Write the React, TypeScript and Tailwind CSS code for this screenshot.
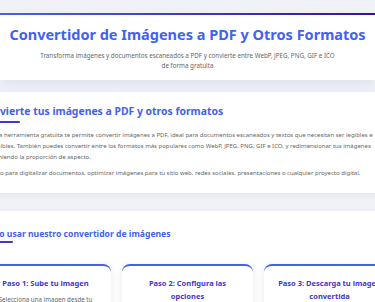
const STEPS = [
  {
    title: 'Paso 1: Sube tu imagen',
    text: 'Selecciona una imagen desde tu dispositivo o arrástrala directamente al área de carga.',
  },
  {
    title: 'Paso 2: Configura las opciones',
    text: 'Elige el formato de salida, el tamaño y la calidad que necesitas.',
  },
  {
    title: 'Paso 3: Descarga tu imagen convertida',
    text: 'Haz clic en convertir y descarga el archivo resultante al instante.',
  },
];

function SectionTitle({ children, size, bar }: { children: string; size: string; bar: string }) {
  return (
    <div>
      <h2 className={`${size} font-bold text-[#4361ee]`}>{children}</h2>
      <div className={`${bar} h-[2px] bg-[#3f37c9] rounded-full`} />
    </div>
  );
}

export default function App() {
  return (
    <div className="min-h-screen overflow-hidden bg-[#f0f2f8] font-['Noto_Sans','Open_Sans',sans-serif] pt-[13px] pb-6">
      <header className="bg-white shadow-[0_4px_10px_rgba(30,40,90,0.08)]">
        <div className="h-[2px] bg-linear-to-r from-[#4361ee] via-[#3f37c9] to-[#3a0ca3]" />
        <div className="pt-[9px] pb-[9px] text-center">
          <h1 className="text-[14.5px] font-bold text-[#4361ee] leading-[20px]">
            Convertidor de Imágenes a PDF y Otros Formatos
          </h1>
          <p className="mt-[7px] mx-auto max-w-[302px] text-[6.25px] leading-[10px] text-[#666]">
            Transforma imágenes y documentos escaneados a PDF y convierte entre WebP, JPEG, PNG, GIF e ICO de forma
            gratuita
          </p>
        </div>
      </header>

      <div className="flex justify-center">
        <main className="w-[455px] shrink-0">
          <section className="mt-[12px] bg-white rounded-lg px-[20px] pt-[12px] pb-[14px] shadow-[0_2px_8px_rgba(30,40,90,0.06)]">
            <SectionTitle size="text-[10.4px] leading-[14px]" bar="w-[40px] mt-[3px]">
              Convierte tus imágenes a PDF y otros formatos
            </SectionTitle>
            <div className="mt-[6.5px] text-[6px] leading-[11px] text-[#666] space-y-[5px]">
              <p>
                Nuestra herramienta gratuita te permite convertir imágenes a PDF, ideal para documentos escaneados y
                textos que necesitan ser legibles e imprimibles. También puedes convertir entre los formatos más
                populares como WebP, JPEG, PNG, GIF e ICO, y redimensionar tus imágenes manteniendo la proporción de
                aspecto.
              </p>
              <p>
                Perfecto para digitalizar documentos, optimizar imágenes para tu sitio web, redes sociales,
                presentaciones o cualquier proyecto digital.
              </p>
            </div>
          </section>

          <section className="mt-[18px] bg-white rounded-lg px-[20px] pt-[17px] pb-[16px] shadow-[0_2px_8px_rgba(30,40,90,0.06)]">
            <SectionTitle size="text-[8.6px] leading-[12px]" bar="w-[33px] mt-[1px]">
              Cómo usar nuestro convertidor de imágenes
            </SectionTitle>
            <div className="mt-[21px] grid grid-cols-3 gap-[11px]">
              {STEPS.map((s) => (
                <div
                  key={s.title}
                  className="rounded-lg border-t-2 border-[#4361ee] bg-white px-[12px] pt-[11px] pb-[12px] text-center shadow-[0_2px_8px_rgba(30,40,90,0.1)]"
                >
                  <h3 className="text-[7.5px] font-bold text-[#3f37c9] leading-[13px]">{s.title}</h3>
                  <p className="mt-[5px] text-[6.2px] leading-[10px] text-[#666]">{s.text}</p>
                </div>
              ))}
            </div>
          </section>
        </main>
      </div>
    </div>
  );
}
